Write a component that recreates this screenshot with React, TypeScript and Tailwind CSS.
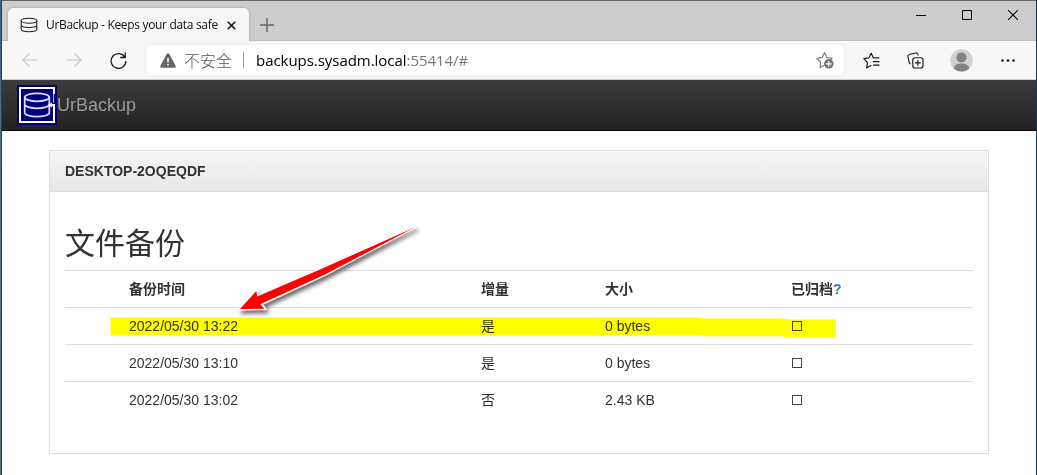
import React from 'react';

const rows = [
  { time: '2022/05/30 13:22', incremental: '是', size: '0 bytes' },
  { time: '2022/05/30 13:10', incremental: '是', size: '0 bytes' },
  { time: '2022/05/30 13:02', incremental: '否', size: '2.43 KB' },
];

function Cylinder({ className }: { className: string }) {
  return (
    <svg className={className} viewBox="0 0 18 16" fill="none" stroke="currentColor" strokeWidth="1.1">
      <ellipse cx="9" cy="3.7" rx="7.8" ry="2.5" />
      <path d="M1.2 3.7v8.6c0 1.4 3.5 2.5 7.8 2.5s7.8-1.1 7.8-2.5V3.7M1.2 8c0 1.4 3.5 2.5 7.8 2.5s7.8-1.1 7.8-2.5" />
    </svg>
  );
}

function TabStrip() {
  return (
    <div className="flex h-10 items-end border-b border-[#bdbdbd] bg-[#cdcdcd] pl-[6px]">
      <div className="relative -mb-px flex h-[33px] w-[241px] shrink-0 items-center rounded-t-[5px] bg-[#f7f7f7] pl-[12px] shadow-[0_0_2px_rgba(0,0,0,0.3)] [clip-path:inset(-3px_-3px_0_-3px)]">
        <Cylinder className="h-4 w-[18px] text-[#222]" />
        <span className="ml-[8px] w-[175px] whitespace-nowrap font-['Open_Sans',sans-serif] text-[12px] leading-4 tracking-[-0.32px] text-[#111]">
          UrBackup - Keeps your data safe
        </span>
        <svg className="ml-[6px] mt-px h-[9px] w-[9px]" viewBox="0 0 9 9" stroke="#111" strokeWidth="1.5">
          <path d="M.7.7l7.6 7.6M8.3.7L.7 8.3" />
        </svg>
      </div>
      <svg className="mb-2 ml-[11px] h-[14px] w-[14px]" viewBox="0 0 14 14" stroke="#666" strokeWidth="1.4">
        <path d="M7 0v14M0 7h14" />
      </svg>
      <div className="ml-auto flex h-full items-start pr-[18px] pt-[9px] text-black">
        <svg className="mt-px h-[10px] w-[10px]" viewBox="0 0 10 10">
          <path d="M0 4h10v1H0z" />
        </svg>
        <svg className="ml-9 h-[10px] w-[10px]" viewBox="0 0 10 10" fill="none" stroke="currentColor">
          <path d="M.5.5h9v9h-9z" />
        </svg>
        <svg className="ml-9 h-[10px] w-[10px]" viewBox="0 0 10 10" stroke="currentColor" strokeWidth="1.1">
          <path d="M0 0l10 10M10 0L0 10" />
        </svg>
      </div>
    </div>
  );
}

function Toolbar() {
  return (
    <div className="flex h-[39px] items-center border-b border-[#cfcfcf] bg-[#f7f7f7] pl-5">
      <svg className="h-4 w-4" viewBox="0 0 16 16" fill="none" stroke="#c8c8c8" strokeWidth="1.1">
        <path d="M15.5 8H.7M7.7 1.5L.7 8l7 6.5" />
      </svg>
      <svg className="ml-7 h-4 w-4" viewBox="0 0 16 16" fill="none" stroke="#c8c8c8" strokeWidth="1.1">
        <path d="M.5 8h14.8M8.3 1.5l7 6.5-7 6.5" />
      </svg>
      <svg className="ml-7 h-[17px] w-[17px]" viewBox="0 0 17 17" fill="none" stroke="#1a1a1a" strokeWidth="1.3">
        <path d="M14.9 5.3A7.4 7.4 0 1 0 15.9 9M15.2.5v5h-5" />
      </svg>
      <div className="ml-[19px] flex h-[30px] w-[698px] items-center rounded bg-white pl-[14px] pr-[10px] shadow-[0_0_2px_rgba(0,0,0,0.12)]">
        <svg className="h-[15px] w-4" viewBox="0 0 16 15">
          <path d="M8 .3c.6 0 1 .3 1.3.8l6.3 11.6c.5 1-.1 2-1.2 2H1.6c-1.1 0-1.7-1-1.2-2L6.7 1.1C7 .6 7.4.3 8 .3z" fill="#666" />
          <path d="M8 5v4.5M8 11v1.6" stroke="#fff" strokeWidth="1.5" />
        </svg>
        <span className="ml-2 font-['Noto_Sans_CJK_SC',sans-serif] text-[16px] font-light leading-6 text-[#555]">不安全</span>
        <span className="ml-[11px] h-4 w-px bg-[#999]" />
        <span className="ml-3 whitespace-nowrap font-['Open_Sans',sans-serif] text-[15px] leading-6 tracking-[-0.04px] text-black">
          backups.sysadm.local<span className="text-[#777]">:55414/#</span>
        </span>
        <svg className="ml-auto h-[18px] w-[18px]" viewBox="0 0 18 18">
          <path d="M8.5 14.2L4 16.5l.7-5.2L1 7.3l5.2-.9L8.5 1.5l2.4 4.9 5.2.9-2 2" fill="none" stroke="#777" strokeWidth="1.1" strokeLinejoin="round" />
          <circle cx="12.8" cy="12.8" r="4.8" fill="#777" />
          <path d="M12.8 10v5.6M10 12.8h5.6" stroke="#fff" strokeWidth="1.2" />
        </svg>
      </div>
      <svg className="ml-[19px] h-[17px] w-[17px]" viewBox="0 0 17 17" fill="none" stroke="#1a1a1a" strokeWidth="1.2" strokeLinejoin="round">
        <path d="M8.2 13.3l-4.6 2.6.9-5.3L.9 6.7l5-.8L8.2 1.2l2.2 4.7h5.9M10 9.6h6.5M10 13.1h6.5" />
      </svg>
      <svg className="ml-[27px] h-[17px] w-[17px]" viewBox="0 0 18 18" fill="none" stroke="#1a1a1a" strokeWidth="1.2">
        <rect x="6.1" y="6.1" width="10.8" height="10.8" rx="2.4" />
        <path d="M11.5 8.4v6.2M8.4 11.5h6.2M12 3.8l-.5-1.5C11.2 1.3 10.2.8 9.2 1L2.4 2.7c-1 .2-1.6 1.1-1.4 2.1l1.4 6.4c.2.9.8 1.4 1.6 1.5" />
      </svg>
      <svg className="ml-[26px] h-[23px] w-[23px]" viewBox="0 0 23 23">
        <circle cx="11.5" cy="11.5" r="11.2" fill="#d2d0ce" />
        <circle cx="11.5" cy="8.4" r="5" fill="#85817e" />
        <path d="M3.7 19.2c1-3.3 4.1-4.7 7.8-4.7s6.8 1.4 7.8 4.7a11.1 11.1 0 0 1-15.6 0z" fill="#85817e" />
      </svg>
      <svg className="ml-7 h-[3px] w-[14px]" viewBox="0 0 14 3" fill="#1a1a1a">
        <circle cx="1.5" cy="1.5" r="1.3" />
        <circle cx="7" cy="1.5" r="1.3" />
        <circle cx="12.5" cy="1.5" r="1.3" />
      </svg>
    </div>
  );
}

function Navbar() {
  return (
    <header className="flex h-[51px] items-center border-b border-[#080808] bg-gradient-to-b from-[#3c3c3c] to-[#222] pl-[15px]">
      <svg className="h-10 w-10" viewBox="0 0 40 40">
        <path d="M0 0h40v40H0z" fill="#00007f" />
        <g fill="none" stroke="#fff" strokeWidth="2">
          <path d="M36 3H3v34h34V20h-5M37 2v7" />
          <path d="M36.5 8v10" strokeWidth="1" opacity=".65" />
          <g stroke="#dcdcff" strokeWidth="1.7">
            <ellipse cx="20" cy="12.3" rx="12.3" ry="4" />
            <path d="M7.7 12.3v15.4c0 2.2 5.5 4 12.3 4s12.3-1.8 12.3-4V12.3M7.7 19.3c0 2.2 5.5 4 12.3 4s12.3-1.8 12.3-4" />
          </g>
        </g>
        <path d="M31 20l4-2.5v5z" fill="#fff" />
      </svg>
      <span className="text-[18px] leading-5 text-[#999]">UrBackup</span>
    </header>
  );
}

function BackupTable() {
  return (
    <table className="w-full table-fixed border-collapse text-left text-[14px] leading-5">
      <colgroup>
        <col className="w-[56px]" />
        <col className="w-[352px]" />
        <col className="w-[124px]" />
        <col className="w-[187px]" />
        <col />
      </colgroup>
      <thead>
        <tr className="h-[37px] border-t border-[#ddd]">
          <th />
          <th className="px-2 font-bold">备份时间</th>
          <th className="px-2 font-bold">增量</th>
          <th className="px-2 font-bold">大小</th>
          <th className="px-[7px] font-bold">
            已归档<span className="text-[#337ab7]">?</span>
          </th>
        </tr>
      </thead>
      <tbody>
        {rows.map((row) => (
          <tr key={row.time} className="h-[37px] border-t border-[#ddd]">
            <td />
            <td className="px-2">{row.time}</td>
            <td className="px-2">{row.incremental}</td>
            <td className="px-2">{row.size}</td>
            <td className="px-2">
              <span className="block h-[10px] w-[10px] border border-[#444]" />
            </td>
          </tr>
        ))}
      </tbody>
    </table>
  );
}

function Annotations() {
  return (
    <svg className="pointer-events-none absolute left-0 top-0 h-[475px] w-[1037px] mix-blend-multiply" viewBox="0 0 1037 475">
      <path d="M110.5 317.5h587.500l8 1h75l8 1h47v17.7h-47l-8-1h-75l-8-1H110.500z" fill="#ff0" />
    </svg>
  );
}

function Arrow() {
  return (
    <svg
      className="pointer-events-none absolute left-[225px] top-[215px] h-[110px] w-[210px] [filter:drop-shadow(2px_3px_2px_rgba(0,0,0,0.6))]"
      viewBox="225 215 210 110"
    >
      <path d="M239.5 309.5L256.5 290.5L257.5 296L320 269.5L415 227L325 275L261.3 304.3L265.5 309Z" fill="#fff" stroke="#fff" strokeWidth="2.4" strokeLinejoin="round" />
      <path d="M240 309L256.3 291L257.200 296.5L320 269.500L415 227.2L325 274.600L260.2 304.2L264.500 308.8Z" fill="#f00" />
    </svg>
  );
}

export default function App() {
  return (
    <div className="relative flex h-[475px] w-[1037px] overflow-hidden bg-white font-['Liberation_Sans','Noto_Sans_CJK_SC',sans-serif] text-[#333]">
      <div className="w-px bg-gradient-to-b from-[#3f6280] via-[#56758a] to-[#607078]" />
      <div className="w-px bg-[#174a68]" />
      <div className="min-w-0 flex-1 border-t border-[#666]">
        <TabStrip />
        <Toolbar />
        <Navbar />
        <main className="pl-[47px] pt-[19px]">
          <section className="h-[304px] w-[940px] border border-[#ddd]">
            <div className="flex h-[41px] items-center border-b border-[#ddd] bg-gradient-to-b from-[#f5f5f5] to-[#e8e8e8] px-[15px] text-[14px] font-bold">
              DESKTOP-2OQEQDF
            </div>
            <div className="px-[15px]">
              <h1 className="flex h-[78px] items-end pb-[12px] font-['Noto_Sans_CJK_SC',sans-serif] text-[30px] font-normal leading-[33px]">
                文件备份
              </h1>
              <BackupTable />
            </div>
          </section>
        </main>
      </div>
      <div className="w-px bg-[#17365d]" />
      <Annotations />
      <Arrow />
    </div>
  );
}
